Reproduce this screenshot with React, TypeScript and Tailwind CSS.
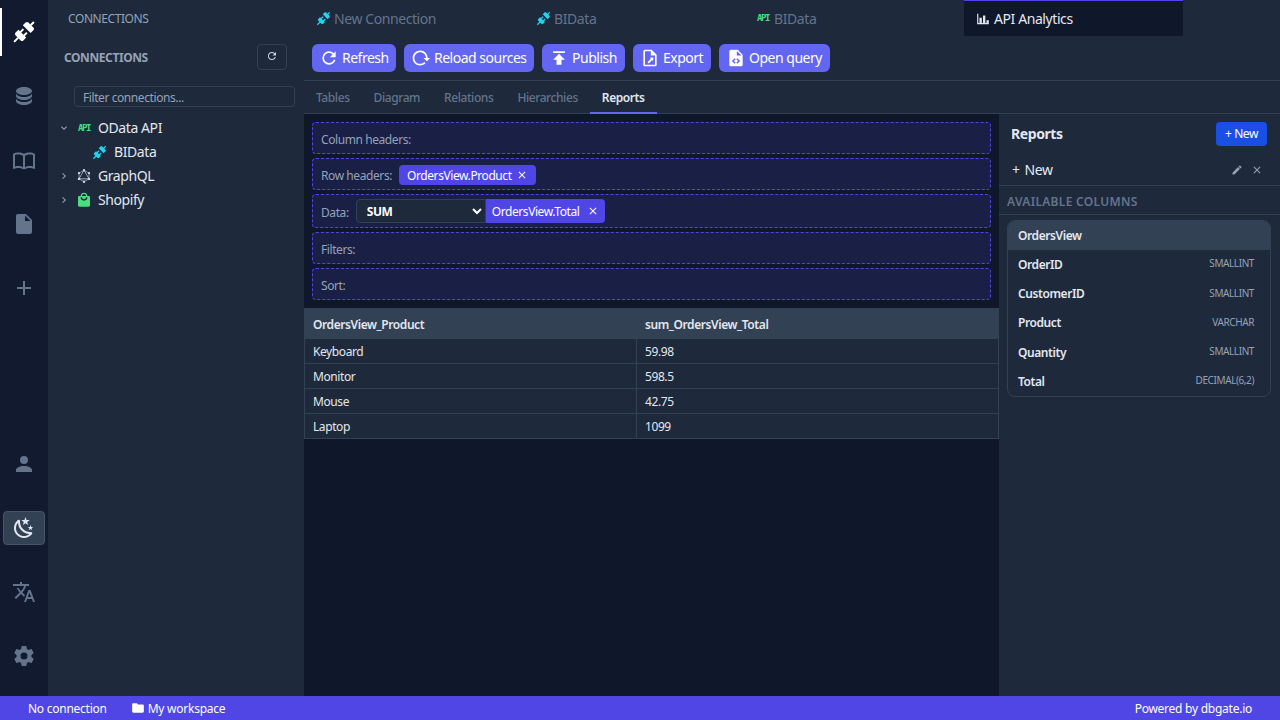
import React from 'react';
import { SiGraphql } from 'react-icons/si';

const P = {
  plug: 'M21.4 7.5C22.2 8.3 22.2 9.6 21.4 10.3L18.6 13.1L10.8 5.3L13.6 2.5C14.4 1.7 15.7 1.7 16.4 2.5L18.2 4.3L21.2 1.3L22.6 2.7L19.6 5.7L21.4 7.5M15.6 13.3L14.2 11.9L11.4 14.7L9.3 12.6L12.1 9.8L10.7 8.4L7.9 11.2L6.4 9.8L3.6 12.6C2.8 13.4 2.8 14.7 3.6 15.4L5.4 17.2L1.4 21.2L2.8 22.6L6.8 18.6L8.6 20.4C9.4 21.2 10.7 21.2 11.4 20.4L14.2 17.6L12.8 16.2L15.6 13.3Z',
  database: 'M12,3C7.58,3 4,4.79 4,7C4,9.21 7.58,11 12,11C16.42,11 20,9.21 20,7C20,4.79 16.42,3 12,3M4,9V12C4,14.21 7.58,16 12,16C16.42,16 20,14.21 20,12V9C20,11.21 16.42,13 12,13C7.58,13 4,11.21 4,9M4,14V17C4,19.21 7.58,21 12,21C16.42,21 20,19.21 20,17V14C20,16.21 16.42,18 12,18C7.58,18 4,16.21 4,14Z',
  book: 'M12 21.5C10.65 20.65 8.2 20 6.5 20C4.85 20 3.15 20.3 1.75 21.05C1.65 21.1 1.6 21.1 1.5 21.1C1.25 21.1 1 20.85 1 20.6V6C2.45 4.9 4.55 4.5 6.5 4.5C8.45 4.5 10.55 4.9 12 6C13.45 4.9 15.55 4.5 17.5 4.5C18.67 4.5 19.89 4.65 21 5C21.75 5.25 22.4 5.55 23 6V20.6C23 20.85 22.75 21.1 22.5 21.1C22.4 21.1 22.35 21.1 22.25 21.05C20.85 20.3 19.15 20 17.5 20C15.8 20 13.35 20.65 12 21.5M11 7.9C9.65 7.05 8.2 6.5 6.5 6.5C5.3 6.5 4.1 6.65 3 7V18.5C4.1 18.15 5.3 18 6.5 18C8.2 18 9.65 18.35 11 19.2V7.9M13 19.2C14.35 18.35 15.8 18 17.5 18C18.7 18 19.9 18.15 21 18.5V7C19.9 6.65 18.7 6.5 17.5 6.5C15.8 6.5 14.35 7.05 13 7.9V19.2Z',
  file: 'M13,9V3.5L18.5,9M6,2C4.89,2 4,2.89 4,4V20A2,2 0 0,0 6,22H18A2,2 0 0,0 20,20V8L14,2H6Z',
  plus: 'M19,13H13V19H11V13H5V11H11V5H13V11H19V13Z',
  account: 'M12,4A4,4 0 0,1 16,8A4,4 0 0,1 12,12A4,4 0 0,1 8,8A4,4 0 0,1 12,4M12,14C16.42,14 20,15.79 20,18V20H4V18C4,15.79 7.58,14 12,14Z',
  night: 'M17.75,4.09L15.22,6.03L16.13,9.09L13.5,7.28L10.87,9.09L11.78,6.03L9.25,4.09L12.44,4L13.5,1L14.56,4L17.75,4.09M21.25,11L19.61,12.25L20.2,14.23L18.5,13.06L16.8,14.23L17.39,12.25L15.75,11L17.81,10.95L18.5,9L19.19,10.95L21.25,11M18.97,15.95C19.8,15.87 20.69,17.05 20.16,17.8C19.84,18.25 19.5,18.67 19.08,19.07C15.17,23 8.84,23 4.94,19.07C1.03,15.17 1.03,8.83 4.94,4.93C5.34,4.53 5.76,4.17 6.21,3.85C6.96,3.32 8.14,4.21 8.06,5.04C7.79,7.9 8.75,10.87 10.95,13.06C13.14,15.26 16.1,16.22 18.97,15.95M17.33,17.97C14.5,17.81 11.7,16.64 9.53,14.5C7.36,12.31 6.2,9.5 6.04,6.68C3.23,9.82 3.34,14.64 6.35,17.66C9.37,20.67 14.19,20.78 17.33,17.97Z',
  translate: 'M12.87,15.07L10.33,12.56L10.36,12.53C12.1,10.59 13.34,8.36 14.07,6H17V4H10V2H8V4H1V6H12.17C11.5,7.92 10.44,9.75 9,11.35C8.07,10.32 7.3,9.19 6.69,8H4.69C5.42,9.63 6.42,11.17 7.67,12.56L2.58,17.58L4,19L9,14L12.11,17.11L12.87,15.07M18.5,10H16.5L12,22H14L15.12,19H19.87L21,22H23L18.5,10M15.88,17L17.5,12.67L19.12,17H15.88Z',
  cog: 'M12,15.5A3.5,3.5 0 0,1 8.5,12A3.5,3.5 0 0,1 12,8.5A3.5,3.5 0 0,1 15.5,12A3.5,3.5 0 0,1 12,15.5M19.43,12.97C19.47,12.65 19.5,12.33 19.5,12C19.5,11.67 19.47,11.34 19.43,11L21.54,9.37C21.73,9.22 21.78,8.95 21.66,8.73L19.66,5.27C19.54,5.05 19.27,4.96 19.05,5.05L16.56,6.05C16.04,5.66 15.5,5.32 14.87,5.07L14.5,2.42C14.46,2.18 14.25,2 14,2H10C9.75,2 9.54,2.18 9.5,2.42L9.13,5.07C8.5,5.32 7.96,5.66 7.44,6.05L4.95,5.05C4.73,4.96 4.46,5.05 4.34,5.27L2.34,8.73C2.21,8.95 2.27,9.22 2.46,9.37L4.57,11C4.53,11.34 4.5,11.67 4.5,12C4.5,12.33 4.53,12.65 4.57,12.97L2.46,14.63C2.27,14.78 2.21,15.05 2.34,15.27L4.34,18.73C4.46,18.95 4.73,19.03 4.95,18.95L7.44,17.94C7.96,18.34 8.5,18.68 9.13,18.93L9.5,21.58C9.54,21.82 9.75,22 10,22H14C14.25,22 14.46,21.82 14.5,21.58L14.87,18.93C15.5,18.67 16.04,18.34 16.56,17.94L19.05,18.95C19.27,19.03 19.54,18.95 19.66,18.73L21.66,15.27C21.78,15.05 21.73,14.78 21.54,14.63L19.43,12.97Z',
  refresh: 'M17.65,6.35C16.2,4.9 14.21,4 12,4A8,8 0 0,0 4,12A8,8 0 0,0 12,20C15.73,20 18.84,17.45 19.73,14H17.65C16.83,16.33 14.61,18 12,18A6,6 0 0,1 6,12A6,6 0 0,1 12,6C13.66,6 15.14,6.69 16.22,7.78L13,11H20V4L17.65,6.35Z',
  reload: 'M2 12C2 16.97 6.03 21 11 21C13.39 21 15.68 20.06 17.4 18.4L15.9 16.9C14.63 18.25 12.86 19 11 19C4.76 19 1.64 11.46 6.05 7.05C10.46 2.64 18 5.77 18 12H15L19 16H19.1L23 12H20C20 7.03 15.97 3 11 3C6.03 3 2 7.03 2 12Z',
  publish: 'M5,4V6H19V4H5M5,14H9V20H15V14H19L12,7L5,14Z',
  fileExport: 'M6 2C4.89 2 4 2.9 4 4V20C4 21.1 4.89 22 6 22H18C19.1 22 20 21.1 20 20V8L14 2H6M6 4H13V9H18V20H6V4M12.5 11.5V13.5L9 17L10.5 18.5L14 15H16V11.5H12.5Z',
  fileCode: 'M14 2H6C4.89 2 4 2.89 4 4V20C4 21.11 4.89 22 6 22H18C19.11 22 20 21.11 20 20V8L14 2M13 9V3.5L18.5 9H13M9.54 15.65L11.63 17.74L10.35 19L7 15.65L10.35 12.3L11.63 13.56L9.54 15.65M17 15.65L13.65 19L12.38 17.74L14.47 15.65L12.38 13.56L13.65 12.3L17 15.65Z',
  chart: 'M22,21H2V3H4V19H6V10H10V19H12V6H16V19H18V14H22V21Z',
  pencil: 'M20.71,7.04C21.1,6.65 21.1,6 20.71,5.63L18.37,3.29C18,2.9 17.35,2.9 16.96,3.29L15.12,5.12L18.87,8.87M3,17.25V21H6.75L17.81,9.93L14.06,6.18L3,17.25Z',
  close: 'M19,6.41L17.59,5L12,10.59L6.41,5L5,6.41L10.59,12L5,17.59L6.41,19L12,13.41L17.59,19L19,17.59L13.41,12L19,6.41Z',
  folder: 'M10,4H4C2.89,4 2,4.89 2,6V18A2,2 0 0,0 4,20H20A2,2 0 0,0 22,18V8C22,6.89 21.1,6 20,6H12L10,4Z',
  down: 'M7.41,8.58L12,13.17L16.59,8.58L18,10L12,16L6,10L7.41,8.58Z',
  right: 'M8.59,16.58L13.17,12L8.59,7.41L10,6L16,12L10,18L8.59,16.58Z',
  bag: 'M12,13A5,5 0 0,1 7,8H9A3,3 0 0,0 12,11A3,3 0 0,0 15,8H17A5,5 0 0,1 12,13M12,3A3,3 0 0,1 15,6H9A3,3 0 0,1 12,3M19,6H17A5,5 0 0,0 12,1A5,5 0 0,0 7,6H5C3.89,6 3,6.89 3,8V20A2,2 0 0,0 5,22H19A2,2 0 0,0 21,20V8C21,6.89 20.1,6 19,6Z',
};

const Icon = ({ d, className }: { d: string; className: string }) => (
  <svg viewBox="0 0 24 24" fill="currentColor" className={className}>
    <path d={d} />
  </svg>
);

const ApiIcon = () => (
  <span className="w-3 text-[9px] font-bold leading-none tracking-[-1.4px] text-[#4ade80] font-['DejaVu_Sans_Mono',monospace]">API</span>
);

const railTop = [P.plug, P.database, P.book, P.file, P.plus];

const Rail = () => (
  <div className="w-12 shrink-0 bg-[#111a2e] flex flex-col justify-between pt-2 pb-4">
    <div className="flex flex-col gap-4">
      {railTop.map((d, i) => (
        <div key={i} className={`relative h-12 flex items-center justify-center ${i === 0 ? 'text-white' : 'text-[#64748b]'}`}>
          {i === 0 && <div className="absolute left-0 top-0 bottom-0 w-0.5 bg-white" />}
          <Icon d={d} className="w-6 h-6" />
        </div>
      ))}
    </div>
    <div className="flex flex-col gap-4">
      <div className="h-12 flex items-center justify-center text-[#64748b]"><Icon d={P.account} className="w-6 h-6" /></div>
      <div className="h-12 flex items-center justify-center">
        <div className="w-[42px] h-[34px] rounded bg-[#334155] border border-[#475569] text-[#e2e8f0] flex items-center justify-center">
          <Icon d={P.night} className="w-6 h-6" />
        </div>
      </div>
      <div className="h-12 flex items-center justify-center text-[#64748b]"><Icon d={P.translate} className="w-6 h-6" /></div>
      <div className="h-12 flex items-center justify-center text-[#64748b]"><Icon d={P.cog} className="w-6 h-6" /></div>
    </div>
  </div>
);

const TreeRow = ({ open, icon, label, indent }: { open?: boolean; icon: React.ReactNode; label: string; indent?: boolean }) => (
  <div className="h-6 flex items-center text-sm text-[#e2e8f0]">
    <div className="w-3 flex justify-center text-[#94a3b8] ml-[10px]">
      {!indent && <Icon d={open ? P.down : P.right} className="w-3 h-3 shrink-0" />}
    </div>
    <div className={`flex justify-center ${indent ? 'w-[14px] ml-[22px] mr-2' : 'w-3 ml-2 mr-2'}`}>{icon}</div>
    <span>{label}</span>
  </div>
);

const Sidebar = () => (
  <div className="w-64 shrink-0 bg-[#1e293b] flex flex-col">
    <div className="h-9 flex items-center pl-5 pt-0.5 text-xs text-[#94a3b8]">CONNECTIONS</div>
    <div className="h-[42px] flex items-center justify-between pl-4 pr-[17px]">
      <span className="text-xs font-bold pt-0.5 text-[#94a3b8]">CONNECTIONS</span>
      <button className="w-[30px] h-[26px] rounded border border-[#334155] flex items-center justify-center text-[#cbd5e1]">
        <Icon d={P.refresh} className="w-3 h-3 mb-0.5" />
      </button>
    </div>
    <div className="pl-[26px] pr-[9px] mt-2 mb-[9px] flex">
      <input
        placeholder="Filter connections..."
        className="w-full h-[21px] px-2 pt-0.5 text-xs bg-transparent rounded border border-[#334155] placeholder:text-[#94a3b8] outline-none"
      />
    </div>
    <TreeRow open icon={<ApiIcon />} label="OData API" />
    <TreeRow indent icon={<Icon d={P.plug} className="w-[15px] h-[15px] shrink-0 text-[#22d3ee]" />} label="BIData" />
    <TreeRow icon={<SiGraphql className="w-[14px] h-[14px] shrink-0 text-[#cbd5e1]" />} label="GraphQL" />
    <TreeRow icon={<Icon d={P.bag} className="w-4 h-4 shrink-0 text-[#4ade80]" />} label="Shopify" />
  </div>
);

const DocTabs = () => (
  <div className="h-9 shrink-0 flex text-sm text-[#64748b]">
    {[
      { icon: <Icon d={P.plug} className="w-[15px] h-[15px] text-[#22d3ee]" />, label: 'New Connection' },
      { icon: <Icon d={P.plug} className="w-[15px] h-[15px] text-[#22d3ee]" />, label: 'BIData' },
      { icon: <ApiIcon />, label: 'BIData' },
    ].map((t, i) => (
      <div key={i} className={`w-[220px] flex items-center ${i === 2 ? 'pl-[13px] gap-[5px]' : 'pl-3 gap-[3px]'}`}>
        {t.icon}
        <span className="pt-0.5">{t.label}</span>
      </div>
    ))}
    <div className="w-[219px] pl-3 flex items-center gap-1 bg-[#0f172a] border-t border-[#4f46e5] text-[#e2e8f0]">
      <Icon d={P.chart} className="w-[14px] h-[14px]" />
      <span>API Analytics</span>
    </div>
  </div>
);

const ToolButton = ({ d, label, width }: { d: string; label: string; width: string }) => (
  <button className={`h-7 pl-[7px] rounded-md bg-[#6366f1] text-white text-sm tracking-[-0.035em] flex items-center gap-[3px] ${width}`}>
    <Icon d={d} className="w-5 h-5 shrink-0" />
    {label}
  </button>
);

const Toolbar = () => (
  <div className="h-[45px] shrink-0 flex items-start pt-2 pl-2 gap-2 border-b border-[#334155]">
    <ToolButton d={P.refresh} label="Refresh" width="w-[84px]" />
    <ToolButton d={P.reload} label="Reload sources" width="w-[130px]" />
    <ToolButton d={P.publish} label="Publish" width="w-[83px]" />
    <ToolButton d={P.fileExport} label="Export" width="w-[78px]" />
    <ToolButton d={P.fileCode} label="Open query" width="w-[111px]" />
  </div>
);

const SubTabs = () => (
  <div className="h-[33px] shrink-0 flex border-b border-[#334155] text-xs font-medium text-[#64748b]">
    {['Tables', 'Diagram', 'Relations', 'Hierarchies'].map((t) => (
      <div key={t} className="px-3 pt-0.5 flex items-center">{t}</div>
    ))}
    <div className="px-3 pt-0.5 flex items-center font-semibold text-[#e2e8f0] border-b-2 border-[#6366f1] -mb-px">Reports</div>
  </div>
);

const Chip = ({ label, className = '' }: { label: string; className?: string }) => (
  <div className={`bg-[#4f46e5] text-white text-xs flex items-center ${className}`}>
    <span className="pt-0.5">{label}</span>
    <Icon d={P.close} className="w-3 h-3" />
  </div>
);

const Zone = ({ label, children, className = 'h-8', gap = 'mr-2' }: { label: string; children?: React.ReactNode; className?: string; gap?: string }) => (
  <div className={`flex items-center px-2 rounded-sm border border-dashed border-[#4f46e5] bg-[#1a1f45] text-xs text-[#94a3b8] ${className}`}>
    <span className={`pt-1 ${gap}`}>{label}</span>
    {children}
  </div>
);

const rows = [
  ['Keyboard', '59.98'],
  ['Monitor', '598.5'],
  ['Mouse', '42.75'],
  ['Laptop', '1099'],
];

const Report = () => (
  <div className="flex-1 bg-[#0f172a] flex flex-col">
    <div className="flex flex-col gap-1 p-2">
      <Zone label="Column headers:" />
      <Zone label="Row headers:" gap="mr-[7px]">
        <Chip label="OrdersView.Product" className="h-5 mt-0.5 rounded pl-2 pr-2 gap-1" />
      </Zone>
      <Zone label="Data:" className="h-[34px]" gap="mr-[7px]">
        <select className="w-[130px] h-6 pl-1.5 bg-[#1e293b] text-white text-xs font-bold rounded-l border border-[#334155] outline-none">
          <option>SUM</option>
        </select>
        <Chip label="OrdersView.Total" className="h-6 rounded-r pl-1.5 pr-1.5 gap-2" />
      </Zone>
      <Zone label="Filters:" />
      <Zone label="Sort:" />
    </div>
    <table className="w-full border-separate border-spacing-0 text-xs text-[#e2e8f0]">
      <thead>
        <tr className="h-[31px] bg-[#334155] text-left">
          <th className="w-[333px] px-2 pl-[9px] pt-0.5 font-semibold">OrdersView_Product</th>
          <th className="px-2 pt-0.5 font-semibold">sum_OrdersView_Total</th>
        </tr>
      </thead>
      <tbody>
        {rows.map(([a, b]) => (
          <tr key={a} className="h-[25px] bg-[#1e293b]">
            <td className="px-2 pt-0.5 border-l border-r border-b border-[#334155]">{a}</td>
            <td className="px-2 pt-0.5 border-r border-b border-[#334155]">{b}</td>
          </tr>
        ))}
      </tbody>
    </table>
  </div>
);

const columns = [
  ['OrderID', 'SMALLINT'],
  ['CustomerID', 'SMALLINT'],
  ['Product', 'VARCHAR'],
  ['Quantity', 'SMALLINT'],
  ['Total', 'DECIMAL(6,2)'],
];

const ReportsPanel = () => (
  <div className="w-[281px] shrink-0 bg-[#1e293b] flex flex-col text-[#e2e8f0]">
    <div className="h-10 flex items-center justify-between pl-3 pr-[13px]">
      <span className="text-sm font-bold">Reports</span>
      <button className="h-6 w-[51px] rounded bg-[#1a4fe6] text-white text-xs">+ New</button>
    </div>
    <div className="h-[32px] flex items-center justify-between pl-[13px] pr-[17px] border-b border-[#334155] text-sm">
      <span className="flex gap-[5px]"><span>+</span><span>New</span></span>
      <div className="flex items-center gap-2 text-[#94a3b8]">
        <Icon d={P.pencil} className="w-3 h-3" />
        <Icon d={P.close} className="w-3 h-3" />
      </div>
    </div>
    <div className="h-[29px] flex items-center pl-2 pt-1 border-b border-[#334155] text-xs font-semibold tracking-wide text-[#64748b]">AVAILABLE COLUMNS</div>
    <div className="mx-2 mt-[5px] w-[264px] rounded-lg border border-[#334155] overflow-hidden text-xs font-semibold">
      <div className="h-[29px] bg-[#334155] flex items-center px-2.5">OrdersView</div>
      {columns.map(([n, t]) => (
        <div key={n} className="h-[29.2px] flex items-center justify-between pl-2.5 pr-4">
          <span className="pt-px">{n}</span>
          <span className="text-[10px] font-normal text-[#94a3b8] uppercase mb-px">{t}</span>
        </div>
      ))}
    </div>
  </div>
);

const StatusBar = () => (
  <div className="h-6 shrink-0 bg-[#4f46e5] text-white text-xs tracking-[-0.021em] flex items-center justify-between pl-7 pr-7">
    <div className="flex items-center">
      <span className="pt-0.5">No connection</span>
      <Icon d={P.folder} className="w-[14px] h-[14px] ml-6 mr-[3px]" />
      <span className="pt-0.5">My workspace</span>
    </div>
    <span className="pt-0.5">Powered by dbgate.io</span>
  </div>
);

export default function App() {
  return (
    <div className="w-[1280px] h-[720px] overflow-hidden flex flex-col bg-[#1e293b] tracking-[-0.026em] font-['Noto_Sans',sans-serif]">
      <div className="flex-1 flex min-h-0">
        <Rail />
        <Sidebar />
        <div className="flex-1 flex flex-col min-w-0">
          <DocTabs />
          <Toolbar />
          <SubTabs />
          <div className="flex-1 flex min-h-0">
            <Report />
            <ReportsPanel />
          </div>
        </div>
      </div>
      <StatusBar />
    </div>
  );
}
